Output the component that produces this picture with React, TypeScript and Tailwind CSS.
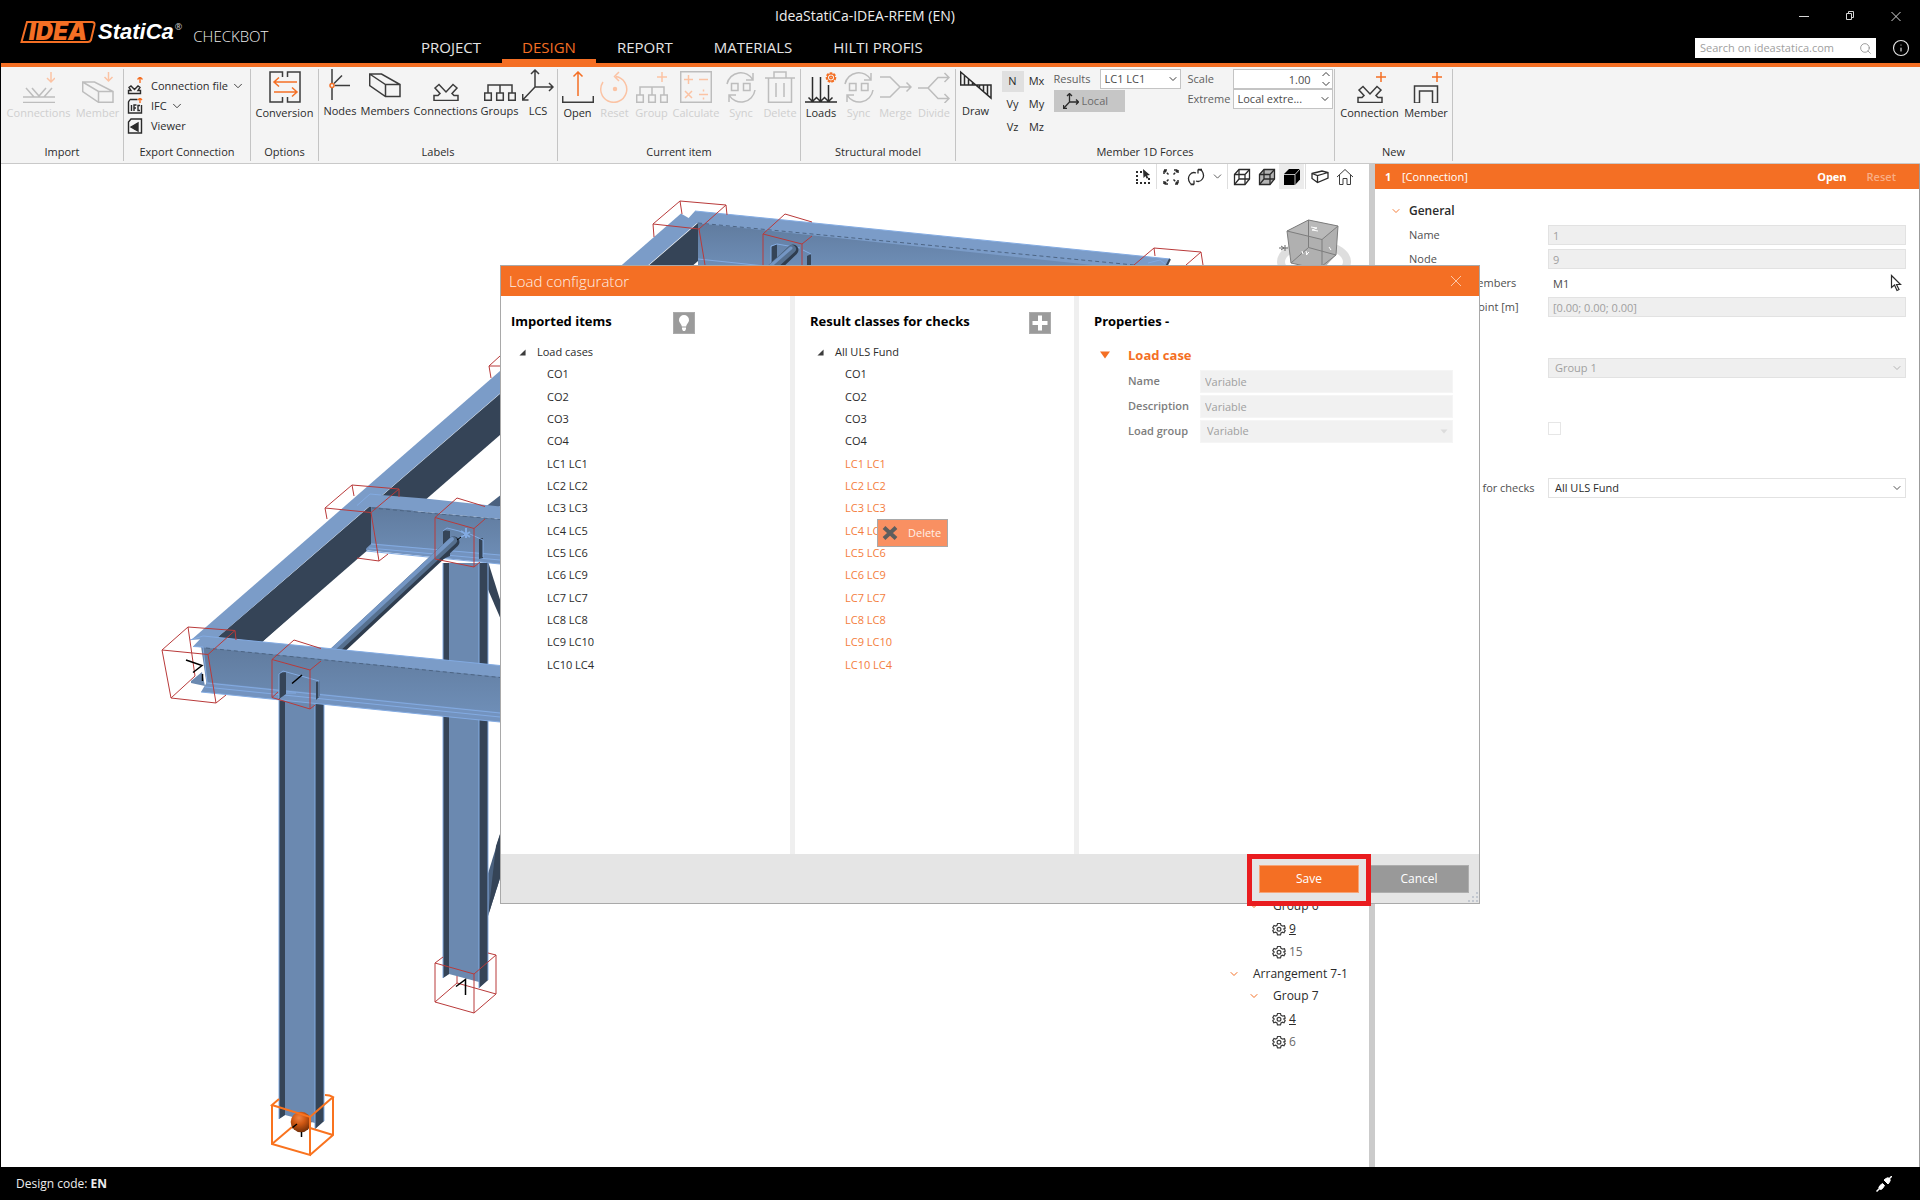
import React, { useState } from "react";
import { ChevronDown, Search, Info } from "lucide-react";
import clsx from "clsx";

const ORANGE = "#f46f24";

type IconProps = { children: React.ReactNode; color?: string; className?: string };

function Ico({ children, color = "#3c3c3c", className = "h-8 w-8" }: IconProps) {
  return (
    <svg viewBox="0 0 32 32" className={className} fill="none" stroke={color} strokeWidth="1.5" aria-hidden="true">
      {children}
    </svg>
  );
}

const syncShape = (
  <>
    <path d="M2 13A14 14 0 0 1 28 9M28 2V9H21" />
    <path d="M30 19A14 14 0 0 1 4 24M4 31V24H11" />
    <path d="M6.500 12.500H13V19.500H6.500ZM18.500 12.500H25V19.500H18.500Z" />
  </>
);
const treeShape = (
  <path d="M4 24V16H28V24M16 16V24M.7 24H7.300V31.300H.7ZM12.700 24H19.300V31.300H12.700ZM24.700 24H31.300V31.300H24.700Z" />
);
const trussShape = (
  <path d="M4 31.500V26.500H8L10 24.500L5 19L9 15.500L16 23L23 15.500L27 19L22 24.500L24 26.500H28V31.500Z" />
);
const boxShape = <path d="M.7 5H12.500L31 15.500V27.500H16.500L.7 16.500ZM.7 5L16.500 15.500H31M16.500 15.500V27.500" />;

const icons = {
  importConnections: (
    <Ico color="#bdbdbd">
      <path d="M0 26H32M0 31.500H32M3 17L11 26M9 17L16 25L23 17M29 17L21 26" />
      <path d="M28 1V11M24 7L28 11L32 7" stroke="#fbc3a4" />
    </Ico>
  ),
  importMember: (
    <Ico color="#bdbdbd">
      <path d="M.7 11H12.500L31 20.500V31.300H16.500L.7 20.500ZM.7 11L16.500 20.500H31M16.500 20.500V31.300" />
      <path d="M26.500 1V10M22.500 6L26.500 10L30.500 6" stroke="#fbc3a4" />
    </Ico>
  ),
  conversion: (
    <Ico>
      <path d="M13.500 6V1H1V31H13.500V26M18.500 6V1H31V31H18.500V26" />
      <path d="M28 11H5M10 6.500L5 11L10 15.500M5 21H28M23 16.500L28 21L23 25.500" stroke={ORANGE} />
    </Ico>
  ),
  nodes: (
    <Ico>
      <path d="M8 0V14M8 19V31M10.500 16.500H26M10 14.500L18 6.500" />
      <circle cx="8" cy="16.500" r="2" stroke={ORANGE} />
    </Ico>
  ),
  members: <Ico>{boxShape}</Ico>,
  connections: <Ico>{trussShape}</Ico>,
  groups: <Ico>{treeShape}</Ico>,
  lcs: (
    <Ico>
      <path d="M13 1V18H31M13 18L.7 31M9 5L13 1L17 5M27 14L31 18L27 22M.7 25V31H6.500" />
    </Ico>
  ),
  open: (
    <Ico>
      <path d="M.7 25V31.300H31.300V25" />
      <path d="M16 25V1M11.500 5.500L16 1L20.500 5.500" stroke={ORANGE} />
    </Ico>
  ),
  reset: (
    <Ico color="#fbc3a4">
      <path d="M4 11A13 13 0 1 0 17 5.500M20 1L15.500 5.500L20 10" />
      <circle cx="16" cy="18" r="1.500" fill="#fbc3a4" />
    </Ico>
  ),
  group: (
    <Ico color="#bdbdbd">
      {treeShape}
      <path d="M26 1V11M21 6H31" stroke="#fbc3a4" />
    </Ico>
  ),
  calculate: (
    <Ico color="#bdbdbd">
      <path d="M.7 .7H31.300V31.300H.7Z" />
      <path
        d="M8.500 4V13M4 8.500H13M19 8.500H28M5 20L12 27M12 20L5 27M19 23.500H28M23.500 18.500V20.500M23.500 26.500V28.500"
        stroke="#fbc3a4"
      />
    </Ico>
  ),
  sync: <Ico color="#bdbdbd">{syncShape}</Ico>,
  trash: (
    <Ico color="#bdbdbd">
      <path d="M1 7H31M10 7V1H22V7M4.500 7V31.300H27.500V7M12 12V26M20 12V26" />
    </Ico>
  ),
  loads: (
    <Ico color="#2b2b2b">
      <path d="M0 31H32M7.500 6V30M15.500 6V30M23.500 14V30M3.500 26.500L7.500 30.500L11.500 26.500L15.500 30.500L19.500 26.500L23.500 30.500L27.500 26.500" />
      <circle cx="26" cy="6.500" r="4.300" stroke={ORANGE} strokeWidth="2" strokeDasharray="2.500 1.200" />
      <circle cx="26" cy="6.500" r="3.600" stroke={ORANGE} strokeWidth="1.200" />
      <circle cx="26" cy="6.500" r="1.300" stroke={ORANGE} />
    </Ico>
  ),
  merge: (
    <Ico color="#bdbdbd">
      <path d="M0 6H10L20 16H31M0 26H10L20 16M26.500 11.500L31 16L26.500 20.500" />
    </Ico>
  ),
  divide: (
    <Ico color="#bdbdbd">
      <path d="M0 17H10L20 6.500H31M10 17L20 27.500H31M26.500 2L31 6.500L26.500 11M26.500 23L31 27.500L26.500 32" />
    </Ico>
  ),
  draw: (
    <Ico color="#2b2b2b">
      <path d="M.7 3V16H31V29ZM4.500 6V16M8.500 10V16M12.500 13V16M19.500 16V19M23.500 16V23M27.500 16V26" />
    </Ico>
  ),
  newConnection: (
    <Ico>
      {trussShape}
      <path d="M27 1V11M22 6H32" stroke={ORANGE} />
    </Ico>
  ),
  newMember: (
    <Ico>
      <path d="M4.500 32V15H27.500V32H22.500V20H9.500V32Z" />
      <path d="M27 1V11M22 6H32" stroke={ORANGE} />
    </Ico>
  ),
};

type RibbonButtonProps = { icon: React.ReactNode; label: string; width: string; disabled?: boolean };

function RibbonButton({ icon, label, width, disabled }: RibbonButtonProps) {
  return (
    <button
      type="button"
      disabled={disabled}
      className={clsx(
        "flex shrink-0 flex-col items-center whitespace-nowrap text-[11px] leading-4",
        width,
        disabled ? "text-[#cfcfcf]" : "text-[#2b2b2b]",
      )}
    >
      {icon}
      <span className="mt-[2px]">{label}</span>
    </button>
  );
}

type RibbonGroupProps = { title: string; width: string; children: React.ReactNode };

function RibbonGroup({ title, width, children }: RibbonGroupProps) {
  return (
    <section className={clsx("flex shrink-0 flex-col border-r border-[#c4c4c4]", width)}>
      <div className="flex flex-1 items-start justify-center">{children}</div>
      <h2 className="pb-[1px] text-center text-[11px] leading-4 text-[#2b2b2b]">{title}</h2>
    </section>
  );
}

function Logo() {
  return (
    <div className="flex w-[400px] shrink-0 items-start pt-[21px] pl-[19px]">
      <div className="relative h-[22px] w-[76px]">
        <svg viewBox="0 0 76 22" className="absolute inset-0 h-full w-full" aria-hidden="true">
          <path d="M7 1H72Q75 1 74.500 4L71 19Q70 21 68 21H1.500Z" fill="#000" stroke={ORANGE} strokeWidth="2" />
        </svg>
        <span className="relative block text-center font-['Inter'] text-[24px] font-black leading-[22px] text-[#f46f24] italic">
          IDEA
        </span>
      </div>
      <span className="ml-[2px] font-['Liberation_Sans'] text-[22px] leading-[22px] font-bold text-white italic">
        StatiCa
      </span>
      <span className="ml-[1px] text-[9px] leading-3 text-[#cccccc]">®</span>
      <span className="ml-[11px] text-[15px] leading-[30px] font-light text-[#ededed]">CHECKBOT</span>
    </div>
  );
}

const TABS = ["PROJECT", "DESIGN", "REPORT", "MATERIALS", "HILTI PROFIS"];

function Header() {
  return (
    <header className="flex h-[63px] bg-black">
      <Logo />
      <div className="flex flex-1 flex-col">
        <h1 className="pt-1 pl-[374px] text-[14px] leading-6 text-[#ededed]">IdeaStatiCa-IDEA-RFEM (EN)</h1>
        <nav className="mt-auto flex gap-[1px]">
          {TABS.map((t) => (
            <button
              key={t}
              type="button"
              className={clsx(
                "border-b-4 px-5 text-[15px] leading-6",
                t === "DESIGN" ? "border-[#f46f24] text-[#f46f24]" : "border-transparent text-[#e4e4e4]",
              )}
            >
              {t}
            </button>
          ))}
        </nav>
      </div>
      <div className="flex flex-col items-end pr-[10px]">
        <div className="flex h-8 items-center gap-8 pr-[7px] text-[#d6d6d6]">
          <button type="button" aria-label="Minimize">
            <svg viewBox="0 0 14 14" className="h-[14px] w-[14px]" stroke="currentColor">
              <path d="M2 7.500H12" />
            </svg>
          </button>
          <button type="button" aria-label="Restore">
            <svg viewBox="0 0 14 14" className="h-[14px] w-[14px]" fill="none" stroke="currentColor">
              <path d="M3.500 4.500H8.500V10.500H3.500ZM5.500 4.500V2.500H10.500V8.500H8.500" />
            </svg>
          </button>
          <button type="button" aria-label="Close">
            <svg viewBox="0 0 14 14" className="h-[14px] w-[14px]" stroke="currentColor">
              <path d="M2.500 3L11.500 12M11.500 3L2.500 12" />
            </svg>
          </button>
        </div>
        <div className="mt-[6px] flex items-center gap-4">
          <div className="flex h-5 w-[181px] items-center bg-white pr-1">
            <input
              aria-label="Search on ideastatica.com"
              placeholder="Search on ideastatica.com"
              className="w-full min-w-0 flex-1 pl-[5px] text-[11px] outline-none placeholder:text-[#a0a0a0]"
            />
            <Search size={13} strokeWidth={1.5} color="#8a8a8a" />
          </div>
          <button type="button" aria-label="Info">
            <Info size={18} strokeWidth={1.5} color="#e6e6e6" />
          </button>
        </div>
      </div>
    </header>
  );
}

function ExportRow({ icon, label, arrow }: { icon: React.ReactNode; label: string; arrow?: boolean }) {
  return (
    <button type="button" className="flex h-5 items-center text-[11px] text-[#2b2b2b]">
      {icon}
      <span className="ml-2">{label}</span>
      {arrow && <ChevronDown size={14} strokeWidth={1.5} className="ml-[3px]" />}
    </button>
  );
}

const pageShape = <path d="M3 1.500H10.500M3 1.500L1.500 4V15H14.500V7" />;

function NativeSelect({ label, value, className }: { label: string; value: string; className: string }) {
  return (
    <span className="relative inline-flex">
      <select
        aria-label={label}
        className={clsx(
          "appearance-none border border-[#c4c4c4] bg-white pr-5 pl-1 text-[11px] text-[#4a4a4a] outline-none",
          className,
        )}
      >
        <option>{value}</option>
      </select>
      <ChevronDown size={12} strokeWidth={2} className="pointer-events-none absolute top-1 right-[2px] text-[#3c3c3c]" />
    </span>
  );
}

const FORCES = ["N", "Mx", "Vy", "My", "Vz", "Mz"];

function Ribbon() {
  const [force, setForce] = useState("N");
  return (
    <div className="flex h-[101px] overflow-hidden border-t-4 border-b border-t-[#f46f24] border-b-[#c9c9c9] bg-[#f4f4f4] pt-[2px] pb-[2px]">
      <RibbonGroup title="Import" width="w-[123px]">
        <div className="flex pt-[2px] pl-[3px]">
          <RibbonButton icon={icons.importConnections} label="Connections" width="w-[68px]" disabled />
          <RibbonButton icon={icons.importMember} label="Member" width="w-[50px]" disabled />
        </div>
      </RibbonGroup>
      <RibbonGroup title="Export Connection" width="w-[127px]">
        <div className="flex w-full flex-col items-start pt-[7px] pl-[3px]">
          <ExportRow
            label="Connection file"
            arrow
            icon={
              <svg viewBox="0 0 16 18" className="h-[18px] w-4" fill="none" stroke="#2b2b2b" strokeWidth="1.400">
                <path d="M1.500 16.500V13.500H4L2 10.500L4 9L7.500 12.500L11 9L13 10.500L11 13.500H13.500V16.500Z" />
                <path d="M13 6V0M10.500 2.500L13 0L15.500 2.500" stroke={ORANGE} />
              </svg>
            }
          />
          <ExportRow
            label="IFC"
            arrow
            icon={
              <svg viewBox="0 0 16 16" className="h-4 w-4" fill="none" stroke="#2b2b2b" strokeWidth="1.400">
                {pageShape}
                <path d="M4.500 7V13M7 13V7H9.500M7 10H9M13 7.500H11V12.500H13" />
                <path d="M13 5V0M11 2L13 0L15 2" stroke={ORANGE} />
              </svg>
            }
          />
          <ExportRow
            label="Viewer"
            icon={
              <svg viewBox="0 0 16 16" className="h-4 w-4" fill="none" stroke="#2b2b2b" strokeWidth="1.400">
                <path d="M4 1H14.500V15H1.500V4Z" />
                <path d="M4 9L11 5V13ZM8 7V12" fill="#2b2b2b" />
              </svg>
            }
          />
        </div>
      </RibbonGroup>
      <RibbonGroup title="Options" width="w-[68px]">
        <RibbonButton icon={icons.conversion} label="Conversion" width="w-[66px] pt-[2px]" />
      </RibbonGroup>
      <RibbonGroup title="Labels" width="w-[239px]">
        <div className="flex pl-[2px]">
          <RibbonButton icon={icons.nodes} label="Nodes" width="w-[38px]" />
          <RibbonButton icon={icons.members} label="Members" width="w-[52px]" />
          <RibbonButton icon={icons.connections} label="Connections" width="w-[69px]" />
          <RibbonButton icon={icons.groups} label="Groups" width="w-[39px]" />
          <RibbonButton icon={icons.lcs} label="LCS" width="w-[38px]" />
        </div>
      </RibbonGroup>
      <RibbonGroup title="Current item" width="w-[243px]">
        <div className="flex pt-[2px]">
          <RibbonButton icon={icons.open} label="Open" width="w-[38px]" />
          <RibbonButton icon={icons.reset} label="Reset" width="w-[36px]" disabled />
          <RibbonButton icon={icons.group} label="Group" width="w-[38px]" disabled />
          <RibbonButton icon={icons.calculate} label="Calculate" width="w-[51px]" disabled />
          <RibbonButton icon={icons.sync} label="Sync" width="w-[39px]" disabled />
          <RibbonButton icon={icons.trash} label="Delete" width="w-[39px]" disabled />
        </div>
      </RibbonGroup>
      <RibbonGroup title="Structural model" width="w-[155px]">
        <div className="flex pt-[2px]">
          <RibbonButton icon={icons.loads} label="Loads" width="w-[38px]" />
          <RibbonButton icon={icons.sync} label="Sync" width="w-[37px]" disabled />
          <RibbonButton icon={icons.merge} label="Merge" width="w-[37px]" disabled />
          <RibbonButton icon={icons.divide} label="Divide" width="w-[40px]" disabled />
        </div>
      </RibbonGroup>
      <RibbonGroup title="Member 1D Forces" width="w-[379px]">
        <RibbonButton icon={icons.draw} label="Draw" width="w-[36px]" />
        <div className="ml-2 grid grid-cols-2 gap-[2px] pt-[2px]">
          {FORCES.map((f) => (
            <button
              key={f}
              type="button"
              onClick={() => setForce(f)}
              className={clsx("h-[21px] w-[22px] text-[11px] text-[#2b2b2b]", force === f && "bg-[#e0e0e0]")}
            >
              {f}
            </button>
          ))}
        </div>
        <div className="ml-[6px] flex flex-col items-start">
          <div className="flex h-5 items-center text-[11px] text-[#5e5e5e]">
            <span className="w-[46px]">Results</span>
            <NativeSelect label="Results" value="LC1 LC1" className="h-5 w-[81px]" />
          </div>
          <button type="button" className="mt-[1px] flex h-[22px] w-[71px] items-center gap-[3px] bg-[#c6c6c6] pl-[9px] text-[11px] text-[#6b6b6b]">
            <Ico className="h-4 w-4" color="#2b2b2b">
              <path
                d="M13 1V18H31M13 18L1 31M8 6L13 1L18 6M26 13L31 18L26 23M1 24V31H8"
                strokeWidth="2.600"
              />
            </Ico>
            Local
          </button>
        </div>
        <div className="ml-[7px] flex flex-col">
          <div className="flex h-5 items-center text-[11px] text-[#5e5e5e]">
            <label htmlFor="scale" className="w-[45px]">Scale</label>
            <div className="relative">
              <input
                id="scale"
                defaultValue="1.00"
                className="block h-5 w-[100px] border border-[#c4c4c4] bg-white pr-[21px] text-right text-[11px] text-[#4a4a4a] outline-none"
              />
              <svg viewBox="0 0 10 16" className="absolute top-[2px] right-[2px] h-4 w-[10px]" fill="none" stroke="#3c3c3c">
                <path d="M1.500 5L5 1.500L8.500 5M1.500 11L5 14.500L8.500 11" />
              </svg>
            </div>
          </div>
          <div className="flex h-5 items-center text-[11px] text-[#5e5e5e]">
            <span className="w-[45px]">Extreme</span>
            <NativeSelect label="Extreme" value="Local extre..." className="h-5 w-[100px]" />
          </div>
        </div>
      </RibbonGroup>
      <RibbonGroup title="New" width="w-[118px]">
        <div className="flex pt-[2px]">
          <RibbonButton icon={icons.newConnection} label="Connection" width="w-[65px]" />
          <RibbonButton icon={icons.newMember} label="Member" width="w-[48px]" />
        </div>
      </RibbonGroup>
    </div>
  );
}

function ViewToolbar() {
  const btn = "grid h-[25px] w-[25px] place-items-center";
  const sep = <span className="mx-[1px] h-[25px] w-px bg-[#dedede]" />;
  const cube = (fill: string) => (
    <svg viewBox="0 0 18 18" className="h-[18px] w-[18px]" fill={fill} stroke="#2b2b2b" strokeWidth="1.300">
      <path d="M1.500 6.500L6 1.500H16.500V11L12 16.500H1.500Z" />
      <path d="M1.500 6.500H12V16.500M12 6.500L16.500 1.500M6 1.500V11H16.500M6 11L1.500 16.500" fill="none" />
    </svg>
  );
  return (
    <div className="absolute top-0 right-[12px] flex items-center">
      <button type="button" aria-label="Select" className={btn}>
        <svg viewBox="0 0 16 16" className="h-4 w-4" fill="#2b2b2b">
          <path d="M1 2H3V4H1ZM5 2H7V4H5ZM1 6H3V8H1ZM1 10H3V12H1ZM1 13H3V15H1ZM5 13H7V15H5ZM9 13H11V15H9ZM13 13H15V15H13ZM13 9H15V11H13ZM8 0L15 6L12 6.500L13.500 9L11.500 9.500L10.500 7L8.500 9Z" />
        </svg>
      </button>
      {sep}
      <button type="button" aria-label="Zoom all" className={btn}>
        <svg viewBox="0 0 16 16" className="h-4 w-4" fill="none" stroke="#2b2b2b" strokeWidth="1.500">
          <path d="M1 5V1H5M1 1L5.500 5.500M11 1H15V5M15 1L10.500 5.500M15 11V15H11M15 15L10.500 10.500M5 15H1V11M1 15L5.500 10.500" strokeDasharray="3 1" />
        </svg>
      </button>
      <button type="button" aria-label="Rotate" className={btn}>
        <svg viewBox="0 0 18 18" className="h-[18px] w-[18px]" fill="none" stroke="#2b2b2b" strokeWidth="1.300">
          <path d="M9 5C4 3 -1 9 3 15Q4 16.500 7 16M7 16.500V12.500M7 16.500H3.500" />
          <path d="M9 13C14 15 19 9 15 3Q13.500 1.500 11 2M11 1.500V5.500M11 1.500H15" />
        </svg>
      </button>
      <button type="button" aria-label="Rotation options" className="grid h-[25px] w-[18px] place-items-center">
        <ChevronDown size={13} strokeWidth={1.5} color="#3c3c3c" />
      </button>
      {sep}
      <button type="button" aria-label="Wireframe" className={btn}>{cube("none")}</button>
      <button type="button" aria-label="Transparent" className={btn}>{cube("#b5b5b5")}</button>
      <button type="button" aria-label="Solid" className={clsx(btn, "bg-[#ececec]")}>
        <svg viewBox="0 0 18 18" className="h-[18px] w-[18px]">
          <path d="M1 6L6 1H17V11.500L12 17H1Z" fill="#000" />
          <path d="M1 6.500H12V17M12 6.500L17 1" fill="none" stroke="#ececec" strokeWidth=".8" />
        </svg>
      </button>
      {sep}
      <button type="button" aria-label="Perspective" className={btn}>
        <svg viewBox="0 0 18 18" className="h-[18px] w-[18px]" fill="none" stroke="#2b2b2b" strokeWidth="1.300">
          <path d="M1 5.500L11 3L17 4.500V10L6.500 14.500L1 10.500ZM1 5.500L6.500 7.500L17 4.500M6.500 7.500V14.500" />
        </svg>
      </button>
      <button type="button" aria-label="Home view" className={btn}>
        <svg viewBox="0 0 18 18" className="h-[18px] w-[18px]" fill="none" stroke="#3c3c3c">
          <path d="M1 9L9 1.500L17 9M3.500 7V16.500H7V10.500H11V16.500H14.500V7" />
        </svg>
      </button>
    </div>
  );
}

const TOP = "#7b9cc8";
const WEB = "#6b89b0";
const DARK = "#354457";
const EDGE = "#83abe2";
const RED = "#b93a3a";

function Column({ x, top, bottom }: { x: number; top: number; bottom: number }) {
  return (
    <g>
      <path d={`M${x} ${top}H${x + 45}V${bottom + 2}L${x + 36} ${bottom + 10}V${bottom + 4}L${x + 6} ${bottom - 4}L${x} ${bottom}Z`} fill={WEB} />
      <path d={`M${x} ${top}H${x + 6}V${bottom - 4}L${x} ${bottom}Z`} fill={DARK} />
      <path d={`M${x + 36} ${top}H${x + 45}V${bottom + 2}L${x + 36} ${bottom + 10}Z`} fill={DARK} />
      <path d={`M${x} ${top}V${bottom}M${x + 36} ${top}V${bottom + 10}M${x + 45} ${top}V${bottom + 2}`} stroke={EDGE} fill="none" />
    </g>
  );
}

// Steel frame drawn in window coordinates
function FrameModel() {
  return (
    <svg
      viewBox="1 164 1368 1003"
      width="1368"
      height="1003"
      className="absolute top-0 left-0 max-w-none"
      role="img"
      aria-label="Structural model"
    >
      <defs>
        <linearGradient id="web" x1="0" y1="0" x2="0" y2="1">
          <stop offset="0" stopColor="#607b9e" />
          <stop offset="1" stopColor="#6f8fb8" />
        </linearGradient>
        <radialGradient id="node" cx=".4" cy=".3" r=".8">
          <stop offset="0" stopColor="#f08344" />
          <stop offset=".4" stopColor="#cf5713" />
          <stop offset="1" stopColor="#5c2506" />
        </radialGradient>
      </defs>

      {/* braces */}
      <path d="M486 555L502 606V622L486 585Z" fill={DARK} />
      <path d="M486 880L502 828V872L488 916Z" fill="#4a617f" />
      <path d="M496 846L502 828V872L488 916Z" fill={DARK} />
      <path d="M484 508L502 494V506L494 508Z" fill="#4a617f" />

      {/* rear beam */}
      <path d="M698 222L1134 264L1160 270H698Z" fill="url(#web)" />
      <path d="M685 222L695 211L1170 259L1166 270H1140Z" fill={TOP} />
      <path d="M698 223L1134 265" stroke="#4d6584" strokeDasharray="4 3" />
      <path d="M695 211L1170 259M698 259L765 266M1148 263L1160 260L1165 264" stroke={EDGE} fill="none" />
      <path d="M1170 259L1166 267" stroke={DARK} strokeWidth="2" />

      {/* side beam */}
      <path d="M216 639L698 223V261L500 435L262 642Z" fill={DARK} />
      <path d="M191 640L681 213.500L697 223L217 638Z" fill={TOP} />

      {/* middle beam */}
      <path d="M366 550L371 507L500 519V563Z" fill="url(#web)" />
      <path d="M357 505.500L370 494L381 495L425 498.600L500 506.500V519L371 507Z" fill={TOP} />
      <path d="M372 508L500 519.500" stroke="#4d6584" strokeDasharray="4 3" />
      <path d="M370 543L500 555V564L366 550Z" fill="#7393bf" />
      <path d="M371 544L500 555M369 548L500 560M366 551L500 564M357 505.500L370 494L381 495" stroke={EDGE} fill="none" />
      <path d="M217 638L371 507V544L262 642Z" fill={DARK} />

      <Column x={443} top={563} bottom={978} />
      <path d="M443 530L450 531V556L443 559ZM479 538H483V558L479 559Z" fill={DARK} />
      <path d="M443 531L447 528L459 531L464 533M470 534L483 540V557" stroke={EDGE} fill="none" />
      <g fill="none" strokeLinecap="round">
        <path d="M332 656L454 542" stroke="#2f3d4f" strokeWidth="11" />
        <path d="M331 654L453 540.500" stroke="#56708f" strokeWidth="8" />
        <path d="M330 652L452 539" stroke="#7496c4" strokeWidth="4" />
      </g>
      <path d="M457 540L465 534" stroke="#000" />
      <path d="M461 531L470 537M466 528V538M470 532L461 537" stroke={EDGE} strokeWidth="2" />

      {/* front beam */}
      <Column x={279} top={695} bottom={1119} />
      <path d="M191 681L202 672L205 686L191 683Z" fill={WEB} />
      <path d="M201 646L500 676V716L207 687Z" fill="url(#web)" />
      <path d="M193 646.500L203 636L500 665.500V677Z" fill={TOP} />
      <path d="M206 648L500 677.500" stroke="#4d6584" strokeDasharray="4 3" />
      <path d="M207 682L500 712V722L201 692Z" fill="#7393bf" />
      <path d="M207 683L500 713M205 687L500 717M201 692L500 722M190 640L203 636L500 665.500M193 646.500L203 647L207 682" stroke={EDGE} fill="none" />
      <path d="M279 673L286 672V694L279 699ZM316 682L320 681V696L316 700Z" fill={DARK} />
      <path d="M279 698V674L283 671L319 681V697M286 693L296 693" stroke={EDGE} fill="none" />

      {/* connection boxes */}
      <g stroke={RED} strokeWidth="1" fill="none">
        <path d="M162 650L188 627L235 630.500L208 654.500ZM162 650L171 698L216 703L208 654.500M188 627L195 676L171 698M235 630.500L236 640M216 703L226 695" />
        <path d="M325 508L352 485L399 489L371 512.500ZM325 508L327 519M352 485L354 496M399 489V497M371 512.500L379 561L357 558M379 561L388 554" />
        <path d="M485 506.500L457 498L435 517.500L474 528.500L485 519M435 517.500V559L474 567V528.500M474 567L480 562" />
        <path d="M321 648.500L294 640L272 659.500L310 670L321 661M272 659.500V697.500L310 709V670M310 709L315 705M272 697.500L278 692" />
        <path d="M500 356L489 366H500M489 366L491 378" />
        <path d="M653 224L680 201L726 205L699 229ZM653 224L654 237M680 201L682 214M726 205L727 215M699 229L705 265" />
        <path d="M812 222L785 214L763 234L802 244L812 236M763 234V266M802 244V266" />
        <path d="M1134 265L1154 248L1201 252L1186 265M1201 252L1203 265M1154 248L1155 256" />
        <path d="M443 957L435 963L474 974L496 955L488 953M435 963V1002L474 1013V974M474 1013L496 994V955M435 1002L457 983L496 994M457 983V976" />
      </g>
      <g stroke="#000" strokeWidth="1.500" fill="none">
        <path d="M186 660L202 665.500L193 672.500M202.500 674V681M292 683.500L302 675M456 986.500L465.500 979.500V995" />
      </g>

      {/* rear beam joint */}
      <path d="M771 247L777 244V266H771ZM807 256L811 254V266H807Z" fill={DARK} />
      <path d="M771 264V246L777 244L800 248M803 250L811 254" stroke={EDGE} fill="none" />
      <g fill="none" strokeLinecap="round">
        <path d="M770 272L793 250" stroke="#2f3d4f" strokeWidth="11" />
        <path d="M769 270L792 249" stroke="#56708f" strokeWidth="8" />
        <path d="M768 268L791 248" stroke="#7496c4" strokeWidth="3" />
      </g>

      {/* selected support */}
      <circle cx="301" cy="1122" r="10.300" fill="url(#node)" />
      <path d="M292 1128L297 1124M301.500 1132V1137" stroke="#000" strokeWidth="1.500" />
      <path
        d="M279 1099L272 1105L310 1117L333 1097Q330 1095 325 1095M272 1105V1144L310 1155V1117M310 1155L333 1135V1097M272 1144L292 1127M310 1128L333 1135"
        stroke="#f9731f"
        strokeWidth="2"
        fill="none"
      />
    </svg>
  );
}

function NavCube() {
  return (
    <svg viewBox="1274 216 80 84" className="absolute top-[52px] right-[15px] h-[84px] w-20" role="img" aria-label="View cube">
      <ellipse cx="1314" cy="262" rx="33" ry="18" fill="none" stroke="#dedede" strokeWidth="8" />
      <path d="M1287 231L1308.500 220L1338 226L1336 255L1322 270L1291 263Z" fill="#b0b0b0" />
      <path d="M1287 231L1308.500 220L1338 226L1322 239.500Z" fill="#b9b9b9" />
      <path
        d="M1287 231L1308.500 220L1338 226L1322 239.500ZM1287 231L1291 263L1322 270V239.500M1338 226L1336 255L1322 266M1308.500 220V247.500L1336 255M1308.500 247.500L1291 263"
        fill="none"
        stroke="#7d7d7d"
      />
      <path d="M1279 248H1288M1281 246L1284 248L1281 250M1285 245V251" stroke="#6b6b6b" fill="none" />
      <path d="M1311 227L1317 228L1312 230L1318 231M1302 251L1303 254M1306 251L1307 255M1309 252L1306 255M1329 247L1331 250" stroke="#fff" fill="none" />
    </svg>
  );
}

function Gear() {
  return (
    <svg viewBox="0 0 14 14" className="h-[14px] w-[14px]" fill="none" stroke="#3c3c3c" strokeWidth="1.200">
      <path d="M5.500 1.500H8.500L9 3.300L10.800 4.200L12.500 3.700L13.200 6.300L11.800 7L13.200 8.500L12 10.800L10.500 10.200L9 11L8.500 12.800H5.500L5 11L3.500 10.200L1.800 10.800L.8 8.500L2.200 7L.8 5.700L2 3.500L3.600 4.100L5 3.300Z" />
      <circle cx="7" cy="7.200" r="1.900" />
    </svg>
  );
}

function ArrangementTree() {
  const group = (name: string, indent: string) => (
    <div className={clsx("flex h-[22px] items-center gap-[13px] font-medium whitespace-nowrap text-[#2b2b2b]", indent)}>
      <ChevronDown size={12} strokeWidth={2} color={ORANGE} className="shrink-0" />
      <span>{name}</span>
    </div>
  );
  const item = (n: string, current?: boolean) => (
    <div className="flex h-[23px] items-center gap-[3px] pl-11">
      <Gear />
      <span className={current ? "text-[#2b2b2b] underline" : "text-[#6b6b6b]"}>{n}</span>
    </div>
  );
  return (
    <div className="absolute right-[20px] bottom-[114px] w-[121px] text-[12px]">
      {group("Group 6", "pl-[20px]")}
      {item("9", true)}
      {item("15")}
      {group("Arrangement 7-1", "")}
      {group("Group 7", "pl-[20px]")}
      {item("4", true)}
      {item("6")}
    </div>
  );
}

function Field({ id, label, children }: { id: string; label: string; children: React.ReactNode }) {
  return (
    <div className="flex h-6 items-center pr-[13px] pl-[34px]">
      <label htmlFor={id} className="w-[139px] shrink-0 whitespace-nowrap text-[#4f4f4f]">
        {label}
      </label>
      {children}
    </div>
  );
}

function DetailPanel() {
  const input = "h-5 w-full min-w-0 flex-1 border px-1 outline-none";
  const off = "border-[#e2e2e2] bg-[#efefef] text-[#a0a0a0]";
  return (
    <aside className="w-[544px] shrink-0 bg-white text-[11px]">
      <div className="flex h-[25px] items-center bg-[#f46f24] px-[10px] pt-[2px] text-white">
        <strong className="w-[17px]">1</strong>
        <span>[Connection]</span>
        <button type="button" className="ml-auto font-bold">Open</button>
        <button type="button" disabled className="mr-[13px] ml-5 font-semibold text-[#f9ae85]">Reset</button>
      </div>
      <div className="flex items-center gap-[7px] pt-[13px] pb-[3px] pl-[15px]">
        <ChevronDown size={12} strokeWidth={1.8} color={ORANGE} />
        <h3 className="text-[12px] leading-[18px] font-semibold text-[#2b2b2b]">General</h3>
      </div>
      <Field id="f-name" label="Name">
        <input id="f-name" disabled defaultValue="1" className={clsx(input, off)} />
      </Field>
      <Field id="f-node" label="Node">
        <input id="f-node" disabled defaultValue="9" className={clsx(input, off)} />
      </Field>
      <Field id="f-members" label="Connected members">
        <input id="f-members" readOnly defaultValue="M1" className={clsx(input, "border-transparent text-[#4a4a4a]")} />
        <svg viewBox="0 0 12 18" className="mr-1 h-[18px] w-3" fill="#fff" stroke="#2b2b2b" strokeWidth="1.200">
          <path d="M1.500 1.500V13.500L4.500 11L7 16.500L9 15.500L6.500 10.500H10.500Z" />
        </svg>
      </Field>
      <Field id="f-point" label="Selection of point [m]">
        <input id="f-point" disabled defaultValue="[0.00; 0.00; 0.00]" className={clsx(input, off)} />
      </Field>
      <div className="mt-[37px]">
        <Field id="f-group" label="Group">
          <span className="relative flex flex-1">
            <select id="f-group" disabled className={clsx(input, off, "appearance-none pl-[6px] opacity-100")}>
              <option>Group 1</option>
            </select>
            <ChevronDown size={12} strokeWidth={1.5} className="absolute top-1 right-[3px] text-[#a0a0a0]" />
          </span>
        </Field>
      </div>
      <div className="mt-9">
        <Field id="f-check" label="Exclude">
          <input id="f-check" type="checkbox" className="h-[13px] w-[13px] appearance-none border border-[#e6e6e6] bg-white" />
        </Field>
      </div>
      <div className="mt-9">
        <Field id="f-class" label="Result classes for checks">
          <span className="relative flex flex-1">
            <select id="f-class" className={clsx(input, "appearance-none border-[#e2e2e2] pl-[6px] text-[#2b2b2b]")}>
              <option>All ULS Fund</option>
            </select>
            <ChevronDown size={12} strokeWidth={1.8} className="absolute top-1 right-[3px] text-[#3c3c3c]" />
          </span>
        </Field>
      </div>
    </aside>
  );
}

const COMBOS = ["CO1", "CO2", "CO3", "CO4"];
const CASES = [
  "LC1 LC1",
  "LC2 LC2",
  "LC3 LC3",
  "LC4 LC5",
  "LC5 LC6",
  "LC6 LC9",
  "LC7 LC7",
  "LC8 LC8",
  "LC9 LC10",
  "LC10 LC4",
];

function LoadTree({ root, accent }: { root: string; accent?: boolean }) {
  return (
    <ul className="flex h-[333px] flex-col justify-between text-[11px] leading-5 text-[#2b2b2b]">
      <li className="flex items-center gap-[11px] pl-[18px]">
        <svg viewBox="0 0 8 8" className="h-[7px] w-[7px]">
          <path d="M7.500 .5V7.500H.5Z" fill="#3c3c3c" />
        </svg>
        {root}
      </li>
      {COMBOS.map((c) => (
        <li key={c} className="pl-[46px]">{c}</li>
      ))}
      {CASES.map((c) => (
        <li key={c} className={clsx("pl-[46px]", accent && "text-[#f47d3c]")}>{c}</li>
      ))}
    </ul>
  );
}

function LoadConfigurator() {
  const heading = "text-[13px] leading-6 font-bold text-black";
  const square = "mt-[3px] grid h-[22px] w-[22px] place-items-center border border-[#ababab] bg-[#9b9b9b]";
  const prop = "h-[23px] w-[253px] border border-[#f5f5f5] bg-[#f1f1f1] px-1 text-[11px] text-[#a0a0a0] outline-none";
  return (
    <div
      role="dialog"
      aria-label="Load configurator"
      className="absolute top-[265px] left-[499px] flex h-[639px] w-[980px] flex-col border border-[#a9a9a9] bg-white"
    >
      <div className="flex h-[30px] items-center justify-between bg-[#f46f24] pr-[17px] pl-2">
        <h2 className="text-[15px] leading-6 font-light text-[#fff0e6]">Load configurator</h2>
        <button type="button" aria-label="Close dialog">
          <svg viewBox="0 0 12 12" className="h-3 w-3" stroke="#fbc7a8">
            <path d="M1 1L11 11M11 1L1 11" />
          </svg>
        </button>
      </div>
      <div className="flex flex-1">
        <section className="w-[289px]">
          <div className="flex items-start justify-between pt-[13px] pr-[95px] pb-2 pl-[10px]">
            <h3 className={heading}>Imported items</h3>
            <button type="button" aria-label="Hints" className={square}>
              <svg viewBox="0 0 12 18" className="h-[18px] w-3" fill="#fff">
                <path d="M6 1A5 5 0 0 0 1 6C1 9 3.500 9.500 3.800 12.500H8.200C8.500 9.500 11 9 11 6A5 5 0 0 0 6 1ZM4 13.500H8V15L7 17H5L4 15Z" />
              </svg>
            </button>
          </div>
          <LoadTree root="Load cases" />
        </section>
        <section className="w-[284px] border-l-5 border-[#efefef]">
          <div className="flex items-start justify-between pt-[13px] pr-[23px] pb-2 pl-[15px]">
            <h3 className={heading}>Result classes for checks</h3>
            <button type="button" aria-label="Add class" className={square}>
              <svg viewBox="0 0 18 18" className="h-[18px] w-[18px]" stroke="#fff" strokeWidth="4">
                <path d="M9 1.500V16.500M1.500 9H16.500" />
              </svg>
            </button>
          </div>
          <div className="pl-1">
            <LoadTree root="All ULS Fund" accent />
          </div>
        </section>
        <section className="flex-1 border-l-5 border-[#efefef]">
          <h3 className={clsx(heading, "pt-[13px] pl-[15px]")}>Properties -</h3>
          <div className="flex items-center gap-[17px] pt-[10px] pb-[3px] pl-[20px]">
            <svg viewBox="0 0 12 8" className="h-[8px] w-3">
              <path d="M1 .5H11L6 7.500Z" fill={ORANGE} />
            </svg>
            <h4 className="text-[13px] leading-6 font-bold text-[#f46f24]">Load case</h4>
          </div>
          <div className="grid grid-cols-[72px_253px] items-center gap-y-[2px] pl-[49px] text-[11px] font-semibold text-[#7d7d7d]">
            <label htmlFor="p-name">Name</label>
            <input id="p-name" disabled defaultValue="Variable" className={clsx(prop, "font-normal")} />
            <label htmlFor="p-desc">Description</label>
            <input id="p-desc" disabled defaultValue="Variable" className={clsx(prop, "font-normal")} />
            <label htmlFor="p-group">Load group</label>
            <span className="relative flex">
              <select id="p-group" disabled className={clsx(prop, "appearance-none pl-[6px] font-normal opacity-100")}>
                <option>Variable</option>
              </select>
              <svg viewBox="0 0 8 5" className="absolute top-[9px] right-[5px] h-[5px] w-2">
                <path d="M.5 .5H7.500L4 4.500Z" fill="#dcdcdc" />
              </svg>
            </span>
          </div>
        </section>
      </div>
      <footer className="flex h-[49px] items-center justify-end gap-[10px] bg-[#e5e5e5] pr-[10px]">
        <button type="button" className="h-7 w-[100px] border border-[#f7a476] bg-[#f46f24] text-[12px] text-white">Save</button>
        <button type="button" className="h-7 w-[100px] border border-[#aeaeae] bg-[#999999] text-[12px] text-white">Cancel</button>
      </footer>
      <svg viewBox="0 0 12 12" className="absolute right-0 bottom-0 h-3 w-3" fill="#c3c8d0">
        <path d="M9 1H11V3H9ZM9 5H11V7H9ZM5 5H7V7H5ZM9 9H11V11H9ZM5 9H7V11H5ZM1 9H3V11H1Z" />
      </svg>

      {/* context menu */}
      <button
        type="button"
        className="absolute top-[253px] left-[376px] flex h-7 w-[71px] items-center gap-[10px] border border-[#a9a9a9] bg-[#f99062] pl-[4px] text-[11px] text-[#fff1e8]"
      >
        <svg viewBox="0 0 16 16" className="h-4 w-4" stroke="#5e5e5e" strokeWidth="4">
          <path d="M2 2.500L14 13.500M14 2.500L2 13.500" />
        </svg>
        Delete
      </button>

      {/* highlight around Save */}
      <div className="pointer-events-none absolute top-[588px] left-[746px] h-[52px] w-[124px] border-5 border-[#e91c1f]" />
    </div>
  );
}

export default function App() {
  return (
    <div className="relative flex min-h-screen flex-col overflow-hidden border-l border-black bg-white font-['Open_Sans','Noto_Sans',sans-serif]">
      <Header />
      <Ribbon />
      <main className="flex flex-1 border-r border-[#9b9b9b]">
        <div className="relative flex-1 overflow-hidden bg-white">
          <FrameModel />
          <ViewToolbar />
          <NavCube />
          <ArrangementTree />
        </div>
        <div className="w-[6px] bg-[#cbcbcb]" />
        <DetailPanel />
      </main>
      <footer className="flex h-[33px] items-center justify-between bg-black pr-7 pl-[15px] text-[12px] text-[#ededed]">
        <span>
          Design code: <strong>EN</strong>
        </span>
        <svg viewBox="0 0 16 16" className="h-4 w-4" fill="#fff" stroke="#fff">
          <path d="M8 4L10 2.500Q12 1 13.500 2.500Q15 4 13.500 6L12 8ZM8.500 9.500L6.500 7.500L4 9.500Q2 11.500 3.500 13Q5 14 6.500 12.500Z" />
          <path d="M13 3L16 0M3.500 12.500L.5 15.500" strokeWidth="1.500" />
        </svg>
      </footer>
      <LoadConfigurator />
    </div>
  );
}
